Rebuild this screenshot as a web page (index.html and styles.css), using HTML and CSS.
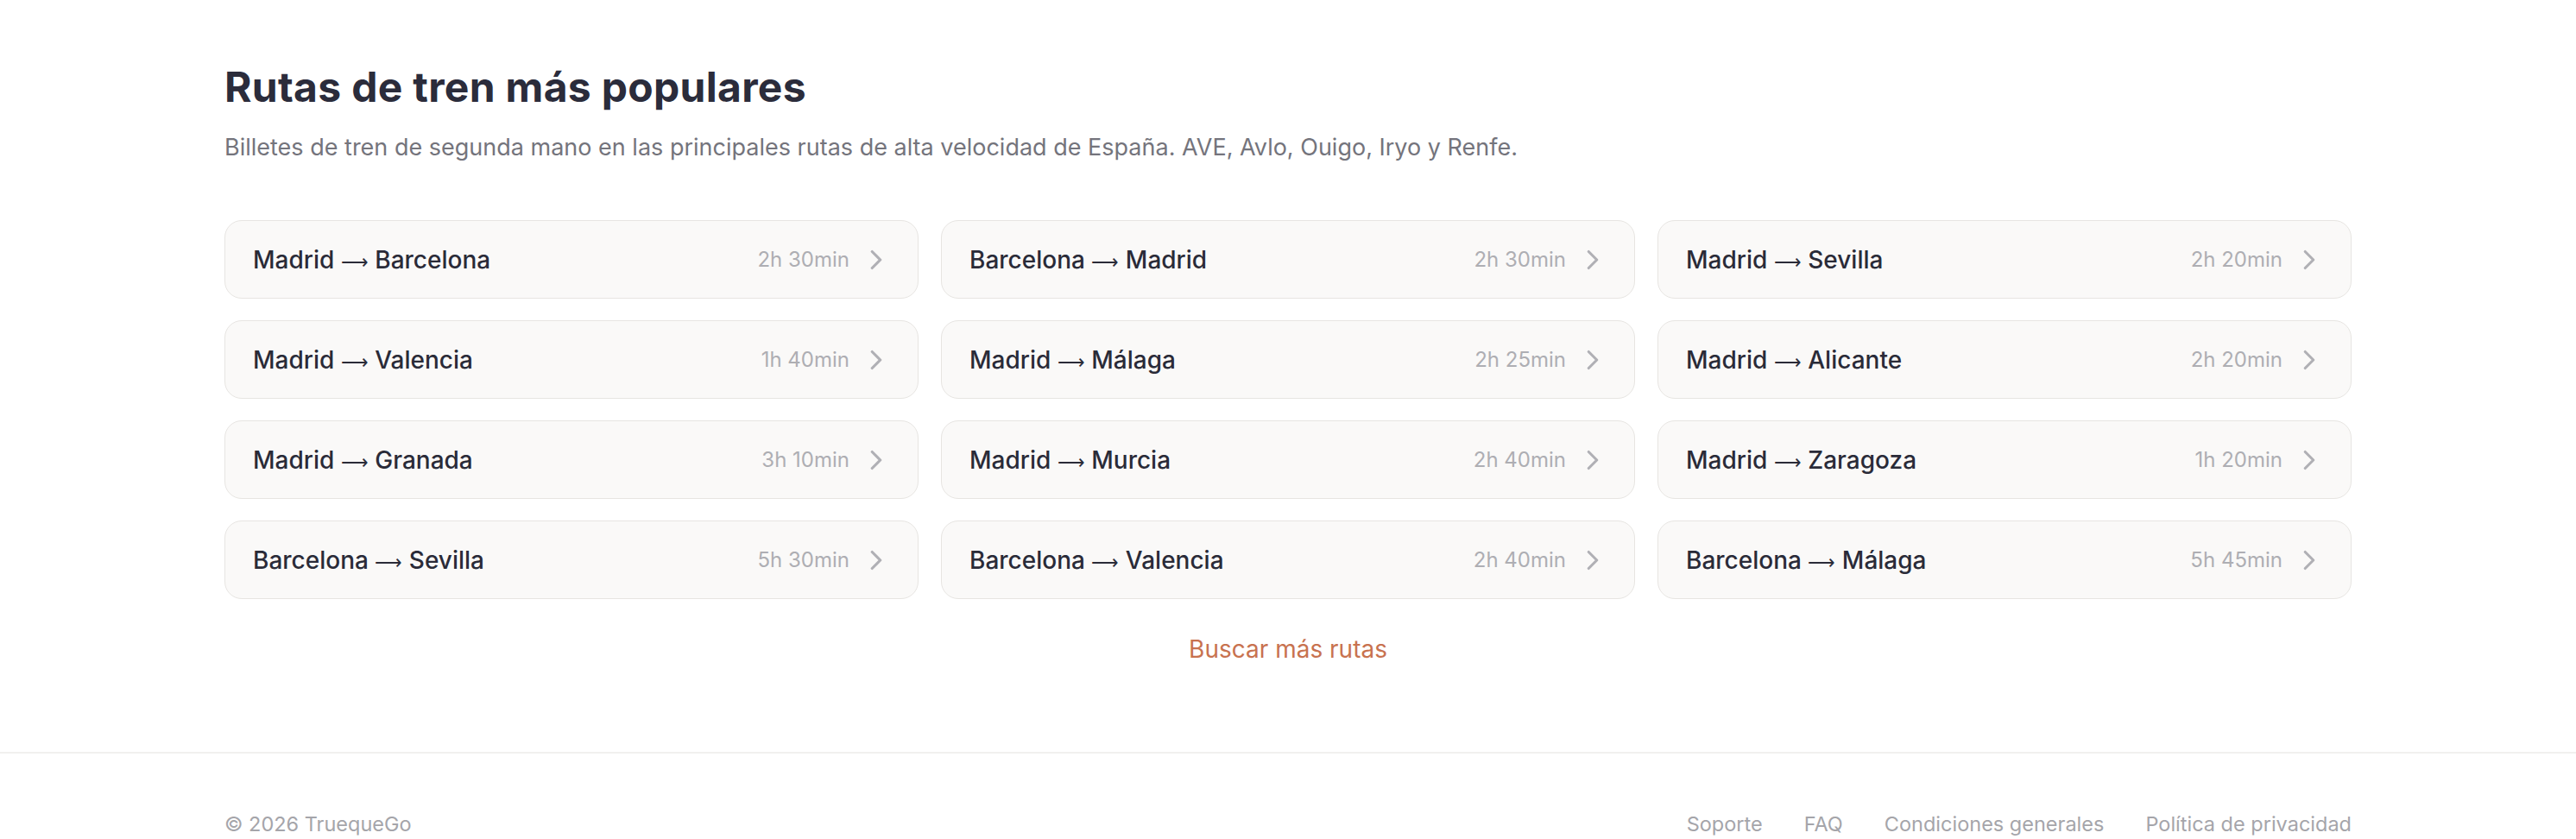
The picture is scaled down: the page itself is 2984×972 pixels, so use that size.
FILE: index.html
```html
<!DOCTYPE html>
<html lang="es">
<head>
  <meta charset="UTF-8" />
  <meta name="viewport" content="width=device-width, initial-scale=1" />
  <title>TruequeGo - Rutas de tren más populares</title>
  <link rel="stylesheet" href="styles.css">
</head>
<body>
  <section class="routes">
    <h1>Rutas de tren más populares</h1>
    <p class="subtitle">Billetes de tren de segunda mano en las principales rutas de alta velocidad de España. AVE, Avlo, Ouigo, Iryo y Renfe.</p>

    <div class="route-grid">
      <a class="route-card" href="#"><span class="route-name">Madrid <span class="arrow">⟶</span> Barcelona</span><span class="route-time">2h 30min</span><svg class="chevron" viewBox="0 0 24 24"><path d="m9 18 6-6-6-6"/></svg></a>
      <a class="route-card" href="#"><span class="route-name">Barcelona <span class="arrow">⟶</span> Madrid</span><span class="route-time">2h 30min</span><svg class="chevron" viewBox="0 0 24 24"><path d="m9 18 6-6-6-6"/></svg></a>
      <a class="route-card" href="#"><span class="route-name">Madrid <span class="arrow">⟶</span> Sevilla</span><span class="route-time">2h 20min</span><svg class="chevron" viewBox="0 0 24 24"><path d="m9 18 6-6-6-6"/></svg></a>
      <a class="route-card" href="#"><span class="route-name">Madrid <span class="arrow">⟶</span> Valencia</span><span class="route-time">1h 40min</span><svg class="chevron" viewBox="0 0 24 24"><path d="m9 18 6-6-6-6"/></svg></a>
      <a class="route-card" href="#"><span class="route-name">Madrid <span class="arrow">⟶</span> Málaga</span><span class="route-time">2h 25min</span><svg class="chevron" viewBox="0 0 24 24"><path d="m9 18 6-6-6-6"/></svg></a>
      <a class="route-card" href="#"><span class="route-name">Madrid <span class="arrow">⟶</span> Alicante</span><span class="route-time">2h 20min</span><svg class="chevron" viewBox="0 0 24 24"><path d="m9 18 6-6-6-6"/></svg></a>
      <a class="route-card" href="#"><span class="route-name">Madrid <span class="arrow">⟶</span> Granada</span><span class="route-time">3h 10min</span><svg class="chevron" viewBox="0 0 24 24"><path d="m9 18 6-6-6-6"/></svg></a>
      <a class="route-card" href="#"><span class="route-name">Madrid <span class="arrow">⟶</span> Murcia</span><span class="route-time">2h 40min</span><svg class="chevron" viewBox="0 0 24 24"><path d="m9 18 6-6-6-6"/></svg></a>
      <a class="route-card" href="#"><span class="route-name">Madrid <span class="arrow">⟶</span> Zaragoza</span><span class="route-time">1h 20min</span><svg class="chevron" viewBox="0 0 24 24"><path d="m9 18 6-6-6-6"/></svg></a>
      <a class="route-card" href="#"><span class="route-name">Barcelona <span class="arrow">⟶</span> Sevilla</span><span class="route-time">5h 30min</span><svg class="chevron" viewBox="0 0 24 24"><path d="m9 18 6-6-6-6"/></svg></a>
      <a class="route-card" href="#"><span class="route-name">Barcelona <span class="arrow">⟶</span> Valencia</span><span class="route-time">2h 40min</span><svg class="chevron" viewBox="0 0 24 24"><path d="m9 18 6-6-6-6"/></svg></a>
      <a class="route-card" href="#"><span class="route-name">Barcelona <span class="arrow">⟶</span> Málaga</span><span class="route-time">5h 45min</span><svg class="chevron" viewBox="0 0 24 24"><path d="m9 18 6-6-6-6"/></svg></a>
    </div>

    <div class="more-routes">
      <a href="#">Buscar más rutas</a>
    </div>
  </section>

  <footer class="site-footer">
    <div class="footer-inner">
      <span class="copyright">© 2026 TruequeGo</span>
      <nav class="footer-links">
        <a href="#">Soporte</a>
        <a href="#">FAQ</a>
        <a href="#">Condiciones generales</a>
        <a href="#">Política de privacidad</a>
      </nav>
    </div>
  </footer>
</body>
</html>
```

FILE: styles.css
```css
body {
  margin: 0;
  font-family: Inter, 'Noto Sans', sans-serif;
  background: #ffffff;
  color: #2b2c3b;
}

a {
  text-decoration: none;
  color: inherit;
}

.routes {
  max-width: 2464px;
  margin: 0 auto;
  padding: 72px 0 0;
}

h1 {
  margin: 0;
  font-size: 48px;
  line-height: 58px;
  font-weight: 700;
  color: #2b2c3b;
  letter-spacing: 0.3px;
}

.subtitle {
  margin: 21px 0 0;
  font-size: 27px;
  line-height: 40px;
  color: #74747c;
}

.route-grid {
  display: grid;
  grid-template-columns: repeat(3, 1fr);
  gap: 25px 26px;
  margin-top: 64px;
}

.route-card {
  display: flex;
  align-items: center;
  height: 91px;
  box-sizing: border-box;
  padding: 0 29px 0 32px;
  background: #faf9f8;
  border: 1.5px solid #e7e5e2;
  border-radius: 20px;
}

.route-name {
  flex: 1;
  font-size: 28px;
  font-weight: 500;
  color: #2a2b38;
}

.arrow {
  font-family: 'DejaVu Sans', sans-serif;
  font-weight: 200;
  font-size: 22px;
}

.route-time {
  font-size: 24px;
  color: #aeaeb3;
}

.chevron {
  width: 38px;
  height: 38px;
  margin-left: 12px;
  fill: none;
  stroke: #b0b0b5;
  stroke-width: 2;
  stroke-linecap: round;
  stroke-linejoin: round;
}

.more-routes {
  text-align: center;
  margin-top: 38px;
}

.more-routes a {
  font-size: 28px;
  line-height: 40px;
  color: #c8724f;
}

.site-footer {
  margin-top: 99px;
  border-top: 2px solid #f1f0ef;
}

.footer-inner {
  max-width: 2464px;
  margin: 0 auto;
  padding: 64px 0 40px;
  display: flex;
  justify-content: space-between;
  font-size: 23.5px;
  line-height: 36px;
  color: #a5a5aa;
}

.footer-links {
  display: flex;
  gap: 48px;
}
```
